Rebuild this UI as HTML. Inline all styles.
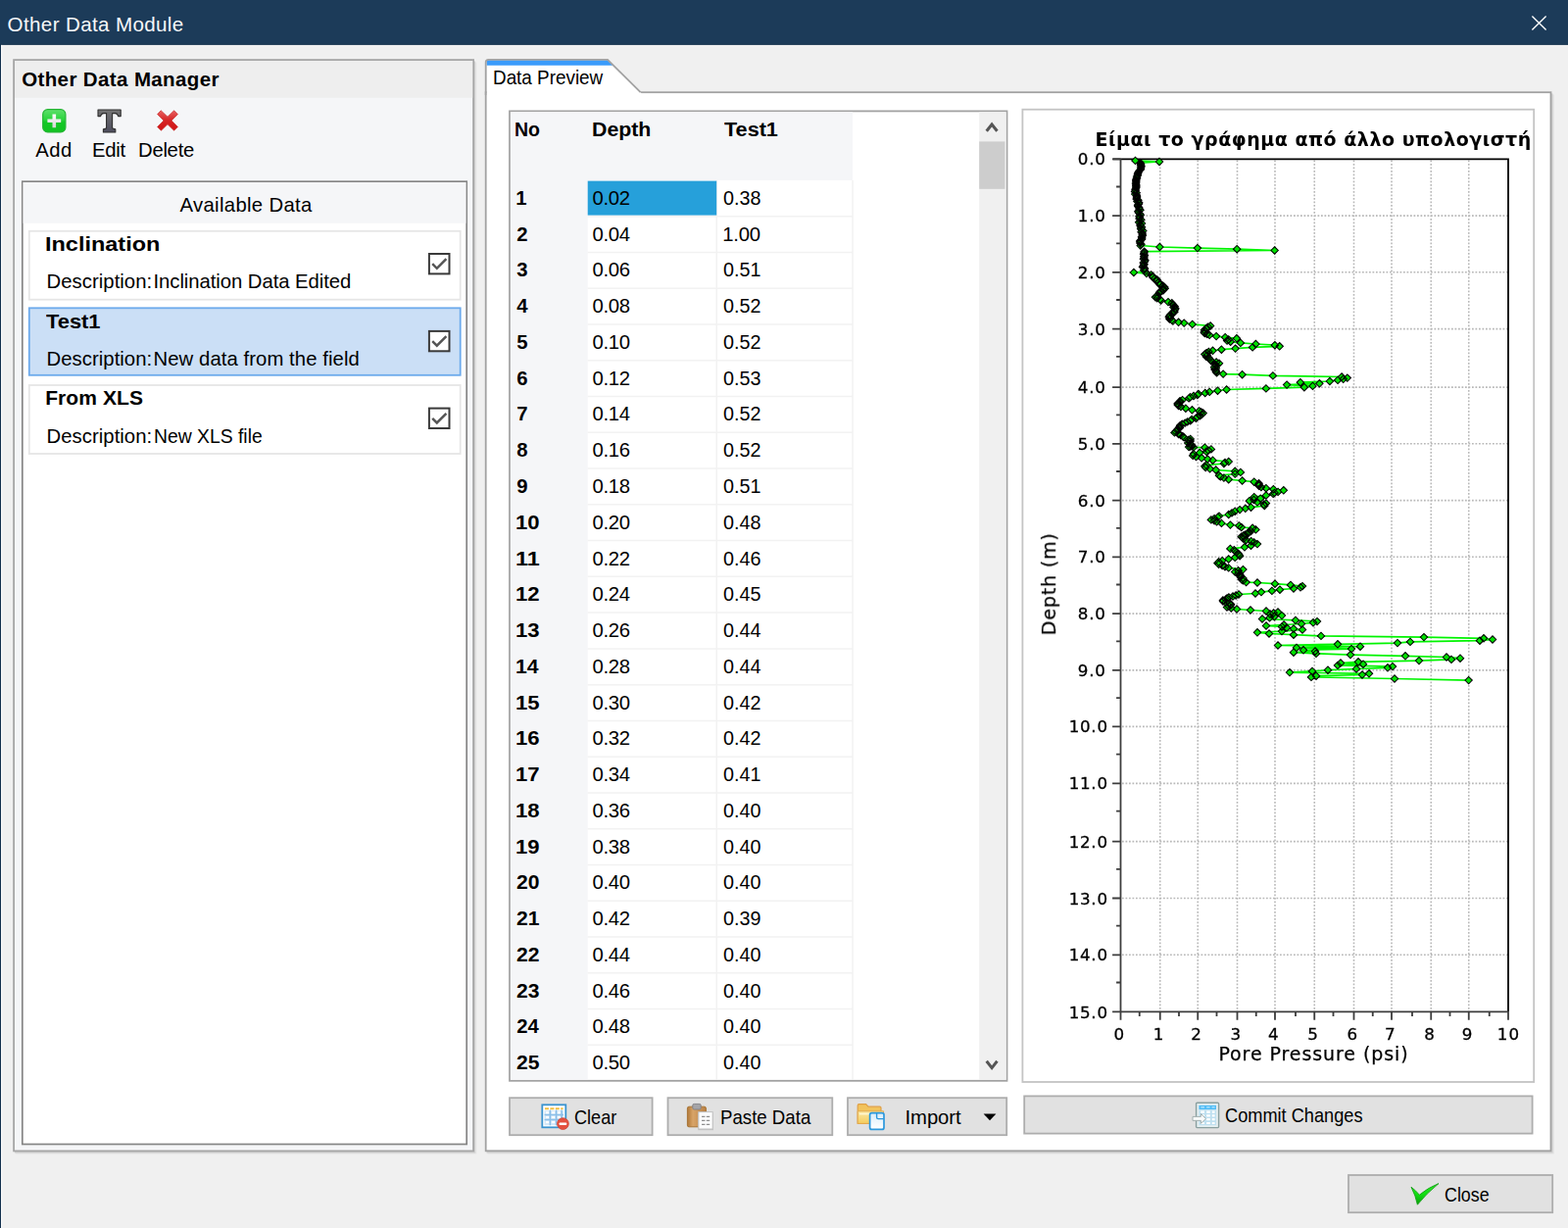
<!DOCTYPE html>
<html lang="en"><head><meta charset="utf-8"><title>Other Data Module</title>
<style>
html,body{margin:0;padding:0;}
body{width:1600px;height:1253px;position:relative;overflow:hidden;background:#f0f0f0;font-family:"Liberation Sans",Arial,sans-serif;color:#000;}
span.t,svg{position:absolute;box-sizing:border-box;}
span.t{white-space:pre;line-height:1;transform-origin:0 0;}
svg{overflow:visible;}
.chart text{font-family:"DejaVu Sans",Verdana,sans-serif;fill:#000;}
.chart .tk{font-size:16.7px;stroke:#000;stroke-width:0.3px;}
.chart .ax{font-size:19px;stroke:#000;stroke-width:0.25px;}
.chart .ti{font-size:19px;font-weight:bold;}
</style></head><body>
<svg width="1600" height="1253" viewBox="0 0 1600 1253" style="left:0;top:0">
<rect x="0.00" y="0.00" width="1600.00" height="45.70" fill="#1c3b59"/>
<rect x="0.00" y="44.60" width="1600.00" height="1.10" fill="#19354f"/>
<rect x="0.00" y="45.00" width="1.15" height="1208.00" fill="#12304d"/>
<rect x="1.15" y="45.90" width="1.05" height="1207.10" fill="#ffffff"/>
<path d="M1563.4 16.4L1577.6 30.6M1577.6 16.4L1563.4 30.6" stroke="#fff" stroke-width="1.35" fill="none"/>
<path d="M485.3 63.5V1176.6H16" fill="none" stroke="#e4e4e4" stroke-width="2"/>
<path d="M484.3 62.5V1175.6H15" fill="none" stroke="#d0d0d0" stroke-width="1.6"/>
<rect x="14.10" y="61.10" width="469.00" height="1113.30" fill="#f5f6f8" stroke="#a6a6a6" stroke-width="1.8"/>
<rect x="15.00" y="62.00" width="467.20" height="37.80" fill="#eeeeee"/>
<rect x="22.80" y="185.20" width="453.40" height="982.30" fill="#ffffff" stroke="#858585" stroke-width="1.7"/>
<rect x="23.60" y="186.00" width="451.80" height="41.80" fill="#f5f6f8"/>
<rect x="29.80" y="235.80" width="439.90" height="69.90" fill="#ffffff" stroke="#e6e6e6" stroke-width="1.8"/>
<rect x="437.90" y="259.00" width="20.60" height="20.40" fill="#ffffff" stroke="#3a3a3a" stroke-width="2"/>
<path d="M441.2 269.2L445.8 273.8L455.4 264.2" stroke="#555" stroke-width="2.5" fill="none"/>
<rect x="29.80" y="314.30" width="439.90" height="68.50" fill="#cbdff6" stroke="#6caaec" stroke-width="1.8"/>
<rect x="437.90" y="337.90" width="20.60" height="20.40" fill="#ffffff" stroke="#3a3a3a" stroke-width="2"/>
<path d="M441.2 348.09999999999997L445.8 352.7L455.4 343.09999999999997" stroke="#555" stroke-width="2.5" fill="none"/>
<rect x="29.80" y="393.00" width="439.90" height="70.00" fill="#ffffff" stroke="#e6e6e6" stroke-width="1.8"/>
<rect x="437.90" y="416.60" width="20.60" height="20.40" fill="#ffffff" stroke="#3a3a3a" stroke-width="2"/>
<path d="M441.2 426.8L445.8 431.40000000000003L455.4 421.8" stroke="#555" stroke-width="2.5" fill="none"/>
<path d="M1584.8 96.5V1176.6H497.5" fill="none" stroke="#e4e4e4" stroke-width="2"/>
<path d="M1583.8 95.5V1175.6H496.5" fill="none" stroke="#d0d0d0" stroke-width="1.6"/>
<rect x="495.70" y="94.20" width="1086.80" height="1080.10" fill="#ffffff" stroke="#a2a2a2" stroke-width="1.8"/>
<path d="M496.6 97V63.5Q496.6 61 498.5 61H620L654.6 95.2V97Z" fill="#fff"/>
<path d="M496.6 66.8V63.2Q496.6 61.2 498.6 61.2H620L625.6 66.8Z" fill="#3a9bfb"/>
<path d="M495.7 97V63.5Q495.7 60.8 498.4 60.8H620L653.6 94.2" fill="none" stroke="#a2a2a2" stroke-width="1.8"/>
<rect x="520.00" y="113.40" width="507.50" height="989.40" fill="#ffffff" stroke="#a2a2a2" stroke-width="1.8"/>
<rect x="520.90" y="114.30" width="349.10" height="69.70" fill="#f5f6f8"/>
<rect x="520.90" y="184.00" width="78.80" height="917.90" fill="#f5f6f8"/>
<path d="M599.7 220.76H870.6M599.7 257.52H870.6M599.7 294.28H870.6M599.7 331.04H870.6M599.7 367.80H870.6M599.7 404.56H870.6M599.7 441.32H870.6M599.7 478.08H870.6M599.7 514.84H870.6M599.7 551.60H870.6M599.7 588.36H870.6M599.7 625.12H870.6M599.7 661.88H870.6M599.7 698.64H870.6M599.7 735.40H870.6M599.7 772.16H870.6M599.7 808.92H870.6M599.7 845.68H870.6M599.7 882.44H870.6M599.7 919.20H870.6M599.7 955.96H870.6M599.7 992.72H870.6M599.7 1029.48H870.6M599.7 1066.24H870.6M731.3 184V1101.9M870 184V1101.9" stroke="#f2f2f2" stroke-width="1.5" fill="none"/>
<rect x="599.70" y="184.60" width="131.50" height="35.00" fill="#26a0da"/>
<rect x="999.20" y="114.30" width="27.40" height="987.60" fill="#f0f0f0"/>
<rect x="999.20" y="144.40" width="26.20" height="48.40" fill="#cdcdcd"/>
<path d="M1006.7 133.8L1012.1 127L1017.5 133.8" stroke="#555" stroke-width="3" fill="none"/>
<path d="M1006.7 1082.8L1012.1 1089.6L1017.5 1082.8" stroke="#555" stroke-width="3" fill="none"/>
<rect x="1043.40" y="111.70" width="521.80" height="992.30" fill="#ffffff" stroke="#c4c4c4" stroke-width="1.8"/>
<rect x="520.00" y="1120.20" width="145.60" height="38.00" fill="#e1e1e1" stroke="#adadad" stroke-width="1.8"/>
<rect x="681.50" y="1120.20" width="167.80" height="38.00" fill="#e1e1e1" stroke="#adadad" stroke-width="1.8"/>
<rect x="865.00" y="1120.20" width="162.20" height="38.00" fill="#e1e1e1" stroke="#adadad" stroke-width="1.8"/>
<rect x="1045.20" y="1118.40" width="518.40" height="38.20" fill="#e1e1e1" stroke="#adadad" stroke-width="1.8"/>
<rect x="1376.00" y="1199.00" width="208.20" height="38.20" fill="#e1e1e1" stroke="#adadad" stroke-width="1.8"/>
<path d="M1003.6 1136.6H1016.4L1010 1143.2Z" fill="#000"/>
</svg>
<svg style="left:43px;top:110.7px" width="25" height="25" viewBox="0 0 25 25"><defs><linearGradient id="ga" x1="0" y1="0" x2="0" y2="1"><stop offset="0" stop-color="#5fe06c"/><stop offset="0.45" stop-color="#2ad43c"/><stop offset="0.55" stop-color="#14c826"/><stop offset="1" stop-color="#12c222"/></linearGradient><linearGradient id="gp" x1="0" y1="0" x2="0" y2="1"><stop offset="0" stop-color="#ffffff"/><stop offset="1" stop-color="#d4d4d4"/></linearGradient></defs><rect x="0.7" y="0.7" width="23.2" height="23.2" rx="5" fill="url(#ga)" stroke="#27b536" stroke-width="1.2"/><path d="M10.5 5.4H14.1V10.5H19.2V14.1H14.1V19.2H10.5V14.1H5.4V10.5H10.5Z" fill="url(#gp)"/></svg>
<svg style="left:99px;top:111px" width="25" height="25" viewBox="0 0 25 25"><defs><linearGradient id="ge" x1="0" y1="0" x2="0" y2="1"><stop offset="0" stop-color="#747474"/><stop offset="1" stop-color="#4c4c5c"/></linearGradient></defs><path d="M1 1H24.2V7.6H21.6Q21 4.8 18.6 4.6H15.6V19.4Q15.8 20.6 18.8 20.8V24H6.4V20.8Q9.4 20.6 9.6 19.4V4.6H6.6Q4.2 4.8 3.6 7.6H1Z" fill="url(#ge)" stroke="#2e2e2e" stroke-width="1.1" stroke-linejoin="round"/></svg>
<svg style="left:159.4px;top:111.4px" width="24" height="24" viewBox="0 0 24 24"><defs><linearGradient id="gd" x1="0" y1="0" x2="0" y2="1"><stop offset="0" stop-color="#e86060"/><stop offset="0.5" stop-color="#d62424"/><stop offset="1" stop-color="#cf1212"/></linearGradient></defs><path d="M5.2 1.8L12 8.2L18.6 1.8L22.4 5.6L16 12L22.4 18.4L18.6 22.2L12 15.8L5.4 22.2L1.6 18.4L8 12L1.6 5.6Z" fill="url(#gd)" stroke="#cc3a3a" stroke-width="0.8" stroke-linejoin="round"/></svg>
<svg class="chart" width="522" height="993" viewBox="1043 111 522 993" style="left:1043px;top:111px">
<defs><filter id="bl" x="-5%" y="-5%" width="110%" height="110%"><feGaussianBlur stdDeviation="0.6"/></filter></defs>
<g filter="url(#bl)">
<path d="M1183.75 163.5V1032.4M1222.25 163.5V1032.4M1262.50 163.5V1032.4M1301.00 163.5V1032.4M1341.25 163.5V1032.4M1381.50 163.5V1032.4M1420.00 163.5V1032.4M1460.25 163.5V1032.4M1498.75 163.5V1032.4M1145.0 220.10H1539.0M1145.0 277.80H1539.0M1145.0 335.60H1539.0M1145.0 395.10H1539.0M1145.0 452.80H1539.0M1145.0 510.60H1539.0M1145.0 568.30H1539.0M1145.0 626.10H1539.0M1145.0 683.90H1539.0M1145.0 741.40H1539.0M1145.0 799.40H1539.0M1145.0 858.60H1539.0M1145.0 916.50H1539.0M1145.0 974.30H1539.0" stroke="#b8b8b8" stroke-width="1.6" stroke-dasharray="1.75 1.75" fill="none"/>
<path d="M1135.5 162.3H1539.0V1032.4" stroke="#000" stroke-width="1.8" fill="none"/>
<path d="M1158.5 163.9L1183.0 165.0L1163.7 166.2L1164.1 167.3L1164.1 168.5L1164.5 169.7L1164.1 170.8L1164.1 172.0L1163.7 173.1L1162.5 174.3L1161.7 175.5L1161.3 176.6L1160.9 177.8L1160.9 178.9L1160.1 180.1L1160.1 181.3L1159.7 182.4L1159.3 183.6L1159.3 184.7L1159.3 185.9L1158.9 187.1L1159.3 188.2L1159.3 189.4L1159.3 190.5L1159.3 191.7L1158.5 193.2L1158.8 194.2L1158.0 195.5L1159.7 196.8L1158.2 198.0L1159.9 199.2L1160.0 200.5L1160.0 201.8L1159.6 203.0L1161.4 204.2L1160.4 205.5L1162.2 206.8L1162.1 208.0L1161.1 209.2L1161.2 210.5L1162.2 211.8L1162.5 213.0L1163.5 214.2L1161.4 215.5L1161.7 216.8L1162.9 218.0L1163.8 219.2L1162.5 220.5L1162.9 221.8L1162.5 223.0L1164.4 224.2L1163.1 225.5L1162.1 226.8L1165.0 228.0L1163.6 229.2L1163.6 230.5L1165.0 231.8L1164.0 233.0L1164.7 234.2L1166.3 235.5L1164.5 236.8L1165.6 238.0L1165.7 239.2L1165.8 240.5L1164.9 241.8L1165.3 243.0L1165.0 244.2L1163.4 245.5L1163.2 246.8L1163.4 248.0L1164.5 249.2L1163.8 250.5L1183.4 252.0L1221.9 253.1L1262.2 254.2L1300.6 255.5L1167.8 256.6L1167.5 257.9L1167.1 259.2L1167.9 260.4L1167.4 261.7L1167.5 263.0L1166.9 264.2L1168.4 265.5L1168.1 266.8L1166.7 268.0L1167.5 269.2L1167.2 270.3L1166.6 271.3L1166.0 272.4L1167.8 273.5L1167.9 274.6L1167.2 275.8L1168.5 276.9L1156.9 278.0L1170.0 279.1L1174.6 280.4L1176.2 281.8L1176.4 283.0L1178.5 284.2L1180.8 285.5L1180.2 286.8L1182.5 288.0L1183.7 289.3L1183.6 290.5L1186.8 291.8L1188.3 293.0L1188.7 294.3L1187.5 295.3L1187.0 296.3L1183.9 297.4L1183.1 298.4L1182.6 299.6L1181.3 300.8L1180.3 302.0L1179.0 303.2L1180.8 304.3L1183.8 305.4L1184.7 306.5L1192.0 308.1L1195.8 309.3L1196.9 310.6L1197.4 311.6L1198.6 312.6L1197.4 313.6L1199.3 314.6L1199.1 315.8L1198.1 317.1L1198.4 318.3L1196.1 319.5L1196.2 320.5L1193.8 321.5L1193.3 322.5L1192.8 323.6L1194.3 324.6L1193.4 325.6L1195.7 326.6L1196.9 327.6L1202.6 328.8L1208.2 329.6L1216.7 330.9L1235.1 332.5L1232.7 333.6L1231.2 334.7L1231.0 335.7L1228.9 336.8L1230.2 337.9L1228.6 339.0L1229.3 340.0L1231.6 340.9L1234.2 341.9L1241.1 343.1L1250.2 344.2L1261.9 345.3L1253.7 346.5L1252.1 347.6L1255.7 348.7L1265.9 349.9L1281.4 351.0L1300.9 352.2L1305.7 353.3L1278.1 354.4L1260.6 355.6L1246.4 356.7L1237.5 357.8L1233.4 359.0L1231.1 360.2L1229.4 361.4L1231.8 362.6L1230.8 363.8L1233.4 365.0L1234.1 366.1L1235.2 367.2L1235.9 368.2L1241.1 369.5L1244.0 370.7L1240.7 372.3L1240.9 373.5L1239.1 374.7L1240.8 375.8L1239.5 376.9L1240.7 378.0L1240.9 379.2L1241.6 380.4L1248.1 381.6L1267.6 382.2L1298.9 383.4L1369.1 384.5L1374.8 385.6L1370.7 386.8L1365.1 387.9L1356.9 389.0L1326.9 390.2L1346.4 391.3L1313.1 392.6L1339.5 393.9L1330.9 395.2L1291.9 396.4L1251.6 397.5L1242.5 398.7L1234.2 399.9L1229.7 401.0L1222.9 402.0L1221.8 403.0L1218.0 404.0L1214.5 405.2L1213.1 406.4L1206.6 408.1L1204.0 409.3L1203.4 410.5L1201.8 411.7L1201.7 412.9L1202.6 414.0L1205.0 415.0L1209.9 416.7L1216.4 418.3L1223.7 419.4L1225.7 420.5L1227.7 421.5L1226.4 422.9L1224.5 424.3L1221.8 425.5L1220.4 426.7L1216.1 428.0L1214.7 429.2L1211.7 430.4L1209.1 431.6L1206.2 432.8L1204.2 434.1L1203.6 435.3L1203.9 436.6L1201.7 437.8L1201.2 439.0L1199.6 440.2L1198.5 441.4L1202.6 443.0L1204.8 444.1L1206.9 445.2L1208.2 446.2L1214.7 447.9L1212.8 448.9L1214.7 449.9L1213.8 450.9L1212.3 451.9L1214.8 453.0L1215.9 454.1L1216.4 455.2L1214.7 455.6L1213.1 456.0L1218.0 456.4L1229.4 456.7L1235.9 458.4L1233.1 459.6L1231.0 460.8L1224.2 462.0L1218.0 463.2L1217.2 464.9L1220.5 466.1L1226.1 467.3L1232.2 468.5L1237.5 469.7L1253.7 471.0L1250.0 472.0L1248.9 473.0L1231.0 474.6L1229.3 475.8L1230.2 477.1L1234.6 478.3L1240.7 479.5L1260.2 480.8L1265.9 481.9L1260.2 483.6L1244.0 485.2L1245.4 486.4L1248.9 487.6L1253.7 489.2L1267.6 490.5L1279.7 491.7L1284.6 493.3L1284.1 494.5L1284.6 495.7L1286.9 497.0L1291.9 498.2L1299.4 499.2L1309.8 500.3L1304.1 501.9L1300.6 502.9L1299.2 503.9L1291.9 505.5L1279.7 507.1L1286.2 508.7L1279.4 510.0L1274.9 511.2L1283.0 512.4L1291.9 513.6L1289.7 514.8L1290.3 516.1L1276.5 517.7L1270.8 518.8L1265.1 520.1L1260.2 521.7L1257.0 523.4L1253.7 525.0L1244.0 526.6L1242.7 527.8L1239.1 529.1L1235.9 530.4L1239.1 531.3L1241.6 532.3L1246.4 533.9L1255.4 535.6L1264.3 536.4L1266.7 538.0L1278.1 538.8L1281.4 540.4L1276.5 542.1L1273.8 543.3L1273.2 544.5L1270.3 545.6L1268.5 546.7L1266.7 547.7L1268.0 548.8L1268.9 549.9L1271.6 551.0L1276.7 552.2L1279.7 553.4L1283.0 555.1L1276.5 556.7L1270.0 558.3L1255.4 559.9L1259.3 561.2L1260.2 562.4L1261.8 563.6L1263.5 564.8L1264.3 566.0L1265.1 567.2L1260.2 568.9L1253.7 570.5L1247.2 572.1L1243.6 573.3L1242.4 574.6L1243.6 575.8L1247.2 577.0L1250.0 578.2L1253.7 579.4L1268.4 581.1L1263.6 582.3L1260.2 583.5L1263.5 585.1L1265.3 586.3L1265.1 587.6L1265.7 588.8L1268.4 590.0L1266.9 591.2L1268.4 592.4L1271.6 594.1L1283.0 594.5L1301.0 595.7L1317.0 596.9L1329.0 598.1L1327.0 599.3L1320.0 600.5L1306.0 601.7L1297.9 602.9L1287.0 604.1L1281.0 605.5L1264.0 606.5L1261.1 607.5L1258.0 608.5L1253.9 609.5L1252.0 610.5L1250.8 611.5L1247.9 612.5L1248.0 613.5L1250.8 614.5L1254.8 615.5L1256.0 616.5L1255.8 617.5L1253.9 618.5L1252.0 619.5L1256.3 620.5L1262.0 621.5L1276.0 622.5L1292.0 623.5L1304.0 624.5L1299.6 625.5L1296.0 626.5L1308.0 628.1L1300.3 629.2L1295.5 630.4L1288.0 631.5L1322.0 632.9L1344.0 634.1L1340.0 635.3L1328.0 636.5L1310.1 637.5L1292.0 638.5L1308.0 639.5L1313.0 640.5L1320.0 641.5L1329.0 642.5L1308.0 644.1L1283.0 645.3L1295.0 646.5L1320.0 647.7L1348.0 648.9L1453.0 650.1L1514.0 651.3L1523.0 652.5L1510.0 653.7L1439.0 654.9L1426.0 656.1L1365.0 657.3L1304.0 658.5L1388.0 659.7L1323.0 660.9L1379.0 662.1L1330.0 663.3L1342.0 664.5L1320.0 665.7L1343.0 666.9L1378.0 668.1L1434.0 669.3L1476.0 670.5L1490.0 671.7L1481.0 672.9L1448.0 674.1L1386.0 675.3L1368.0 676.5L1391.0 677.7L1365.0 678.9L1421.0 680.1L1416.0 681.3L1384.0 682.5L1355.0 683.7L1339.0 684.9L1316.0 686.1L1397.0 687.3L1390.0 688.5L1343.0 689.7L1338.0 690.9L1423.0 692.5L1498.6 694.1" stroke="#00f400" stroke-width="1.7" fill="none" stroke-linejoin="round"/>
<path d="M1154.8 163.9l3.7 -3.7l3.7 3.7l-3.7 3.7zM1179.3 165.0l3.7 -3.7l3.7 3.7l-3.7 3.7zM1160.0 166.2l3.7 -3.7l3.7 3.7l-3.7 3.7zM1160.4 167.3l3.7 -3.7l3.7 3.7l-3.7 3.7zM1160.4 168.5l3.7 -3.7l3.7 3.7l-3.7 3.7zM1160.8 169.7l3.7 -3.7l3.7 3.7l-3.7 3.7zM1160.4 170.8l3.7 -3.7l3.7 3.7l-3.7 3.7zM1160.4 172.0l3.7 -3.7l3.7 3.7l-3.7 3.7zM1160.0 173.1l3.7 -3.7l3.7 3.7l-3.7 3.7zM1158.8 174.3l3.7 -3.7l3.7 3.7l-3.7 3.7zM1158.0 175.5l3.7 -3.7l3.7 3.7l-3.7 3.7zM1157.6 176.6l3.7 -3.7l3.7 3.7l-3.7 3.7zM1157.2 177.8l3.7 -3.7l3.7 3.7l-3.7 3.7zM1157.2 178.9l3.7 -3.7l3.7 3.7l-3.7 3.7zM1156.4 180.1l3.7 -3.7l3.7 3.7l-3.7 3.7zM1156.4 181.3l3.7 -3.7l3.7 3.7l-3.7 3.7zM1156.0 182.4l3.7 -3.7l3.7 3.7l-3.7 3.7zM1155.6 183.6l3.7 -3.7l3.7 3.7l-3.7 3.7zM1155.6 184.7l3.7 -3.7l3.7 3.7l-3.7 3.7zM1155.6 185.9l3.7 -3.7l3.7 3.7l-3.7 3.7zM1155.2 187.1l3.7 -3.7l3.7 3.7l-3.7 3.7zM1155.6 188.2l3.7 -3.7l3.7 3.7l-3.7 3.7zM1155.6 189.4l3.7 -3.7l3.7 3.7l-3.7 3.7zM1155.6 190.5l3.7 -3.7l3.7 3.7l-3.7 3.7zM1155.6 191.7l3.7 -3.7l3.7 3.7l-3.7 3.7zM1154.8 193.2l3.7 -3.7l3.7 3.7l-3.7 3.7zM1155.0 194.2l3.7 -3.7l3.7 3.7l-3.7 3.7zM1154.3 195.5l3.7 -3.7l3.7 3.7l-3.7 3.7zM1156.0 196.8l3.7 -3.7l3.7 3.7l-3.7 3.7zM1154.5 198.0l3.7 -3.7l3.7 3.7l-3.7 3.7zM1156.2 199.2l3.7 -3.7l3.7 3.7l-3.7 3.7zM1156.3 200.5l3.7 -3.7l3.7 3.7l-3.7 3.7zM1156.3 201.8l3.7 -3.7l3.7 3.7l-3.7 3.7zM1155.9 203.0l3.7 -3.7l3.7 3.7l-3.7 3.7zM1157.7 204.2l3.7 -3.7l3.7 3.7l-3.7 3.7zM1156.7 205.5l3.7 -3.7l3.7 3.7l-3.7 3.7zM1158.5 206.8l3.7 -3.7l3.7 3.7l-3.7 3.7zM1158.4 208.0l3.7 -3.7l3.7 3.7l-3.7 3.7zM1157.4 209.2l3.7 -3.7l3.7 3.7l-3.7 3.7zM1157.5 210.5l3.7 -3.7l3.7 3.7l-3.7 3.7zM1158.5 211.8l3.7 -3.7l3.7 3.7l-3.7 3.7zM1158.8 213.0l3.7 -3.7l3.7 3.7l-3.7 3.7zM1159.8 214.2l3.7 -3.7l3.7 3.7l-3.7 3.7zM1157.7 215.5l3.7 -3.7l3.7 3.7l-3.7 3.7zM1158.0 216.8l3.7 -3.7l3.7 3.7l-3.7 3.7zM1159.2 218.0l3.7 -3.7l3.7 3.7l-3.7 3.7zM1160.1 219.2l3.7 -3.7l3.7 3.7l-3.7 3.7zM1158.8 220.5l3.7 -3.7l3.7 3.7l-3.7 3.7zM1159.2 221.8l3.7 -3.7l3.7 3.7l-3.7 3.7zM1158.8 223.0l3.7 -3.7l3.7 3.7l-3.7 3.7zM1160.7 224.2l3.7 -3.7l3.7 3.7l-3.7 3.7zM1159.4 225.5l3.7 -3.7l3.7 3.7l-3.7 3.7zM1158.4 226.8l3.7 -3.7l3.7 3.7l-3.7 3.7zM1161.3 228.0l3.7 -3.7l3.7 3.7l-3.7 3.7zM1159.9 229.2l3.7 -3.7l3.7 3.7l-3.7 3.7zM1159.9 230.5l3.7 -3.7l3.7 3.7l-3.7 3.7zM1161.3 231.8l3.7 -3.7l3.7 3.7l-3.7 3.7zM1160.3 233.0l3.7 -3.7l3.7 3.7l-3.7 3.7zM1161.0 234.2l3.7 -3.7l3.7 3.7l-3.7 3.7zM1162.6 235.5l3.7 -3.7l3.7 3.7l-3.7 3.7zM1160.8 236.8l3.7 -3.7l3.7 3.7l-3.7 3.7zM1161.9 238.0l3.7 -3.7l3.7 3.7l-3.7 3.7zM1162.0 239.2l3.7 -3.7l3.7 3.7l-3.7 3.7zM1162.1 240.5l3.7 -3.7l3.7 3.7l-3.7 3.7zM1161.2 241.8l3.7 -3.7l3.7 3.7l-3.7 3.7zM1161.6 243.0l3.7 -3.7l3.7 3.7l-3.7 3.7zM1161.3 244.2l3.7 -3.7l3.7 3.7l-3.7 3.7zM1159.7 245.5l3.7 -3.7l3.7 3.7l-3.7 3.7zM1159.5 246.8l3.7 -3.7l3.7 3.7l-3.7 3.7zM1159.7 248.0l3.7 -3.7l3.7 3.7l-3.7 3.7zM1160.8 249.2l3.7 -3.7l3.7 3.7l-3.7 3.7zM1160.0 250.5l3.7 -3.7l3.7 3.7l-3.7 3.7zM1179.7 252.0l3.7 -3.7l3.7 3.7l-3.7 3.7zM1218.2 253.1l3.7 -3.7l3.7 3.7l-3.7 3.7zM1258.5 254.2l3.7 -3.7l3.7 3.7l-3.7 3.7zM1296.9 255.5l3.7 -3.7l3.7 3.7l-3.7 3.7zM1164.0 256.6l3.7 -3.7l3.7 3.7l-3.7 3.7zM1163.8 257.9l3.7 -3.7l3.7 3.7l-3.7 3.7zM1163.4 259.2l3.7 -3.7l3.7 3.7l-3.7 3.7zM1164.2 260.4l3.7 -3.7l3.7 3.7l-3.7 3.7zM1163.7 261.7l3.7 -3.7l3.7 3.7l-3.7 3.7zM1163.8 263.0l3.7 -3.7l3.7 3.7l-3.7 3.7zM1163.2 264.2l3.7 -3.7l3.7 3.7l-3.7 3.7zM1164.7 265.5l3.7 -3.7l3.7 3.7l-3.7 3.7zM1164.4 266.8l3.7 -3.7l3.7 3.7l-3.7 3.7zM1163.0 268.0l3.7 -3.7l3.7 3.7l-3.7 3.7zM1163.8 269.2l3.7 -3.7l3.7 3.7l-3.7 3.7zM1163.5 270.3l3.7 -3.7l3.7 3.7l-3.7 3.7zM1162.9 271.3l3.7 -3.7l3.7 3.7l-3.7 3.7zM1162.3 272.4l3.7 -3.7l3.7 3.7l-3.7 3.7zM1164.1 273.5l3.7 -3.7l3.7 3.7l-3.7 3.7zM1164.2 274.6l3.7 -3.7l3.7 3.7l-3.7 3.7zM1163.5 275.8l3.7 -3.7l3.7 3.7l-3.7 3.7zM1164.8 276.9l3.7 -3.7l3.7 3.7l-3.7 3.7zM1153.2 278.0l3.7 -3.7l3.7 3.7l-3.7 3.7zM1166.3 279.1l3.7 -3.7l3.7 3.7l-3.7 3.7zM1170.9 280.4l3.7 -3.7l3.7 3.7l-3.7 3.7zM1172.5 281.8l3.7 -3.7l3.7 3.7l-3.7 3.7zM1172.7 283.0l3.7 -3.7l3.7 3.7l-3.7 3.7zM1174.8 284.2l3.7 -3.7l3.7 3.7l-3.7 3.7zM1177.1 285.5l3.7 -3.7l3.7 3.7l-3.7 3.7zM1176.5 286.8l3.7 -3.7l3.7 3.7l-3.7 3.7zM1178.8 288.0l3.7 -3.7l3.7 3.7l-3.7 3.7zM1180.0 289.3l3.7 -3.7l3.7 3.7l-3.7 3.7zM1179.9 290.5l3.7 -3.7l3.7 3.7l-3.7 3.7zM1183.1 291.8l3.7 -3.7l3.7 3.7l-3.7 3.7zM1184.6 293.0l3.7 -3.7l3.7 3.7l-3.7 3.7zM1185.0 294.3l3.7 -3.7l3.7 3.7l-3.7 3.7zM1183.8 295.3l3.7 -3.7l3.7 3.7l-3.7 3.7zM1183.3 296.3l3.7 -3.7l3.7 3.7l-3.7 3.7zM1180.2 297.4l3.7 -3.7l3.7 3.7l-3.7 3.7zM1179.4 298.4l3.7 -3.7l3.7 3.7l-3.7 3.7zM1178.9 299.6l3.7 -3.7l3.7 3.7l-3.7 3.7zM1177.6 300.8l3.7 -3.7l3.7 3.7l-3.7 3.7zM1176.6 302.0l3.7 -3.7l3.7 3.7l-3.7 3.7zM1175.3 303.2l3.7 -3.7l3.7 3.7l-3.7 3.7zM1177.1 304.3l3.7 -3.7l3.7 3.7l-3.7 3.7zM1180.1 305.4l3.7 -3.7l3.7 3.7l-3.7 3.7zM1181.0 306.5l3.7 -3.7l3.7 3.7l-3.7 3.7zM1188.3 308.1l3.7 -3.7l3.7 3.7l-3.7 3.7zM1192.1 309.3l3.7 -3.7l3.7 3.7l-3.7 3.7zM1193.2 310.6l3.7 -3.7l3.7 3.7l-3.7 3.7zM1193.7 311.6l3.7 -3.7l3.7 3.7l-3.7 3.7zM1194.9 312.6l3.7 -3.7l3.7 3.7l-3.7 3.7zM1193.7 313.6l3.7 -3.7l3.7 3.7l-3.7 3.7zM1195.6 314.6l3.7 -3.7l3.7 3.7l-3.7 3.7zM1195.4 315.8l3.7 -3.7l3.7 3.7l-3.7 3.7zM1194.4 317.1l3.7 -3.7l3.7 3.7l-3.7 3.7zM1194.7 318.3l3.7 -3.7l3.7 3.7l-3.7 3.7zM1192.4 319.5l3.7 -3.7l3.7 3.7l-3.7 3.7zM1192.5 320.5l3.7 -3.7l3.7 3.7l-3.7 3.7zM1190.1 321.5l3.7 -3.7l3.7 3.7l-3.7 3.7zM1189.6 322.5l3.7 -3.7l3.7 3.7l-3.7 3.7zM1189.1 323.6l3.7 -3.7l3.7 3.7l-3.7 3.7zM1190.6 324.6l3.7 -3.7l3.7 3.7l-3.7 3.7zM1189.7 325.6l3.7 -3.7l3.7 3.7l-3.7 3.7zM1192.0 326.6l3.7 -3.7l3.7 3.7l-3.7 3.7zM1193.2 327.6l3.7 -3.7l3.7 3.7l-3.7 3.7zM1198.9 328.8l3.7 -3.7l3.7 3.7l-3.7 3.7zM1204.5 329.6l3.7 -3.7l3.7 3.7l-3.7 3.7zM1213.0 330.9l3.7 -3.7l3.7 3.7l-3.7 3.7zM1231.4 332.5l3.7 -3.7l3.7 3.7l-3.7 3.7zM1229.0 333.6l3.7 -3.7l3.7 3.7l-3.7 3.7zM1227.5 334.7l3.7 -3.7l3.7 3.7l-3.7 3.7zM1227.3 335.7l3.7 -3.7l3.7 3.7l-3.7 3.7zM1225.2 336.8l3.7 -3.7l3.7 3.7l-3.7 3.7zM1226.5 337.9l3.7 -3.7l3.7 3.7l-3.7 3.7zM1224.9 339.0l3.7 -3.7l3.7 3.7l-3.7 3.7zM1225.6 340.0l3.7 -3.7l3.7 3.7l-3.7 3.7zM1227.9 340.9l3.7 -3.7l3.7 3.7l-3.7 3.7zM1230.5 341.9l3.7 -3.7l3.7 3.7l-3.7 3.7zM1237.4 343.1l3.7 -3.7l3.7 3.7l-3.7 3.7zM1246.5 344.2l3.7 -3.7l3.7 3.7l-3.7 3.7zM1258.2 345.3l3.7 -3.7l3.7 3.7l-3.7 3.7zM1250.0 346.5l3.7 -3.7l3.7 3.7l-3.7 3.7zM1248.4 347.6l3.7 -3.7l3.7 3.7l-3.7 3.7zM1252.0 348.7l3.7 -3.7l3.7 3.7l-3.7 3.7zM1262.2 349.9l3.7 -3.7l3.7 3.7l-3.7 3.7zM1277.7 351.0l3.7 -3.7l3.7 3.7l-3.7 3.7zM1297.2 352.2l3.7 -3.7l3.7 3.7l-3.7 3.7zM1302.0 353.3l3.7 -3.7l3.7 3.7l-3.7 3.7zM1274.4 354.4l3.7 -3.7l3.7 3.7l-3.7 3.7zM1256.9 355.6l3.7 -3.7l3.7 3.7l-3.7 3.7zM1242.7 356.7l3.7 -3.7l3.7 3.7l-3.7 3.7zM1233.8 357.8l3.7 -3.7l3.7 3.7l-3.7 3.7zM1229.7 359.0l3.7 -3.7l3.7 3.7l-3.7 3.7zM1227.4 360.2l3.7 -3.7l3.7 3.7l-3.7 3.7zM1225.7 361.4l3.7 -3.7l3.7 3.7l-3.7 3.7zM1228.1 362.6l3.7 -3.7l3.7 3.7l-3.7 3.7zM1227.1 363.8l3.7 -3.7l3.7 3.7l-3.7 3.7zM1229.7 365.0l3.7 -3.7l3.7 3.7l-3.7 3.7zM1230.4 366.1l3.7 -3.7l3.7 3.7l-3.7 3.7zM1231.5 367.2l3.7 -3.7l3.7 3.7l-3.7 3.7zM1232.2 368.2l3.7 -3.7l3.7 3.7l-3.7 3.7zM1237.4 369.5l3.7 -3.7l3.7 3.7l-3.7 3.7zM1240.3 370.7l3.7 -3.7l3.7 3.7l-3.7 3.7zM1237.0 372.3l3.7 -3.7l3.7 3.7l-3.7 3.7zM1237.2 373.5l3.7 -3.7l3.7 3.7l-3.7 3.7zM1235.4 374.7l3.7 -3.7l3.7 3.7l-3.7 3.7zM1237.1 375.8l3.7 -3.7l3.7 3.7l-3.7 3.7zM1235.8 376.9l3.7 -3.7l3.7 3.7l-3.7 3.7zM1237.0 378.0l3.7 -3.7l3.7 3.7l-3.7 3.7zM1237.2 379.2l3.7 -3.7l3.7 3.7l-3.7 3.7zM1237.9 380.4l3.7 -3.7l3.7 3.7l-3.7 3.7zM1244.4 381.6l3.7 -3.7l3.7 3.7l-3.7 3.7zM1263.9 382.2l3.7 -3.7l3.7 3.7l-3.7 3.7zM1295.2 383.4l3.7 -3.7l3.7 3.7l-3.7 3.7zM1365.4 384.5l3.7 -3.7l3.7 3.7l-3.7 3.7zM1371.1 385.6l3.7 -3.7l3.7 3.7l-3.7 3.7zM1367.0 386.8l3.7 -3.7l3.7 3.7l-3.7 3.7zM1361.4 387.9l3.7 -3.7l3.7 3.7l-3.7 3.7zM1353.2 389.0l3.7 -3.7l3.7 3.7l-3.7 3.7zM1323.2 390.2l3.7 -3.7l3.7 3.7l-3.7 3.7zM1342.7 391.3l3.7 -3.7l3.7 3.7l-3.7 3.7zM1309.4 392.6l3.7 -3.7l3.7 3.7l-3.7 3.7zM1335.8 393.9l3.7 -3.7l3.7 3.7l-3.7 3.7zM1327.2 395.2l3.7 -3.7l3.7 3.7l-3.7 3.7zM1288.2 396.4l3.7 -3.7l3.7 3.7l-3.7 3.7zM1247.9 397.5l3.7 -3.7l3.7 3.7l-3.7 3.7zM1238.8 398.7l3.7 -3.7l3.7 3.7l-3.7 3.7zM1230.5 399.9l3.7 -3.7l3.7 3.7l-3.7 3.7zM1226.0 401.0l3.7 -3.7l3.7 3.7l-3.7 3.7zM1219.2 402.0l3.7 -3.7l3.7 3.7l-3.7 3.7zM1218.1 403.0l3.7 -3.7l3.7 3.7l-3.7 3.7zM1214.3 404.0l3.7 -3.7l3.7 3.7l-3.7 3.7zM1210.8 405.2l3.7 -3.7l3.7 3.7l-3.7 3.7zM1209.4 406.4l3.7 -3.7l3.7 3.7l-3.7 3.7zM1202.9 408.1l3.7 -3.7l3.7 3.7l-3.7 3.7zM1200.3 409.3l3.7 -3.7l3.7 3.7l-3.7 3.7zM1199.7 410.5l3.7 -3.7l3.7 3.7l-3.7 3.7zM1198.1 411.7l3.7 -3.7l3.7 3.7l-3.7 3.7zM1198.0 412.9l3.7 -3.7l3.7 3.7l-3.7 3.7zM1198.9 414.0l3.7 -3.7l3.7 3.7l-3.7 3.7zM1201.3 415.0l3.7 -3.7l3.7 3.7l-3.7 3.7zM1206.2 416.7l3.7 -3.7l3.7 3.7l-3.7 3.7zM1212.7 418.3l3.7 -3.7l3.7 3.7l-3.7 3.7zM1220.0 419.4l3.7 -3.7l3.7 3.7l-3.7 3.7zM1222.0 420.5l3.7 -3.7l3.7 3.7l-3.7 3.7zM1224.0 421.5l3.7 -3.7l3.7 3.7l-3.7 3.7zM1222.7 422.9l3.7 -3.7l3.7 3.7l-3.7 3.7zM1220.8 424.3l3.7 -3.7l3.7 3.7l-3.7 3.7zM1218.1 425.5l3.7 -3.7l3.7 3.7l-3.7 3.7zM1216.7 426.7l3.7 -3.7l3.7 3.7l-3.7 3.7zM1212.4 428.0l3.7 -3.7l3.7 3.7l-3.7 3.7zM1211.0 429.2l3.7 -3.7l3.7 3.7l-3.7 3.7zM1208.0 430.4l3.7 -3.7l3.7 3.7l-3.7 3.7zM1205.4 431.6l3.7 -3.7l3.7 3.7l-3.7 3.7zM1202.5 432.8l3.7 -3.7l3.7 3.7l-3.7 3.7zM1200.5 434.1l3.7 -3.7l3.7 3.7l-3.7 3.7zM1199.9 435.3l3.7 -3.7l3.7 3.7l-3.7 3.7zM1200.2 436.6l3.7 -3.7l3.7 3.7l-3.7 3.7zM1198.0 437.8l3.7 -3.7l3.7 3.7l-3.7 3.7zM1197.5 439.0l3.7 -3.7l3.7 3.7l-3.7 3.7zM1195.9 440.2l3.7 -3.7l3.7 3.7l-3.7 3.7zM1194.8 441.4l3.7 -3.7l3.7 3.7l-3.7 3.7zM1198.9 443.0l3.7 -3.7l3.7 3.7l-3.7 3.7zM1201.1 444.1l3.7 -3.7l3.7 3.7l-3.7 3.7zM1203.2 445.2l3.7 -3.7l3.7 3.7l-3.7 3.7zM1204.5 446.2l3.7 -3.7l3.7 3.7l-3.7 3.7zM1211.0 447.9l3.7 -3.7l3.7 3.7l-3.7 3.7zM1209.1 448.9l3.7 -3.7l3.7 3.7l-3.7 3.7zM1211.0 449.9l3.7 -3.7l3.7 3.7l-3.7 3.7zM1210.1 450.9l3.7 -3.7l3.7 3.7l-3.7 3.7zM1208.6 451.9l3.7 -3.7l3.7 3.7l-3.7 3.7zM1211.1 453.0l3.7 -3.7l3.7 3.7l-3.7 3.7zM1212.2 454.1l3.7 -3.7l3.7 3.7l-3.7 3.7zM1212.7 455.2l3.7 -3.7l3.7 3.7l-3.7 3.7zM1211.0 455.6l3.7 -3.7l3.7 3.7l-3.7 3.7zM1209.4 456.0l3.7 -3.7l3.7 3.7l-3.7 3.7zM1214.3 456.4l3.7 -3.7l3.7 3.7l-3.7 3.7zM1225.7 456.7l3.7 -3.7l3.7 3.7l-3.7 3.7zM1232.2 458.4l3.7 -3.7l3.7 3.7l-3.7 3.7zM1229.4 459.6l3.7 -3.7l3.7 3.7l-3.7 3.7zM1227.3 460.8l3.7 -3.7l3.7 3.7l-3.7 3.7zM1220.5 462.0l3.7 -3.7l3.7 3.7l-3.7 3.7zM1214.3 463.2l3.7 -3.7l3.7 3.7l-3.7 3.7zM1213.5 464.9l3.7 -3.7l3.7 3.7l-3.7 3.7zM1216.8 466.1l3.7 -3.7l3.7 3.7l-3.7 3.7zM1222.4 467.3l3.7 -3.7l3.7 3.7l-3.7 3.7zM1228.5 468.5l3.7 -3.7l3.7 3.7l-3.7 3.7zM1233.8 469.7l3.7 -3.7l3.7 3.7l-3.7 3.7zM1250.0 471.0l3.7 -3.7l3.7 3.7l-3.7 3.7zM1246.3 472.0l3.7 -3.7l3.7 3.7l-3.7 3.7zM1245.2 473.0l3.7 -3.7l3.7 3.7l-3.7 3.7zM1227.3 474.6l3.7 -3.7l3.7 3.7l-3.7 3.7zM1225.6 475.8l3.7 -3.7l3.7 3.7l-3.7 3.7zM1226.5 477.1l3.7 -3.7l3.7 3.7l-3.7 3.7zM1230.9 478.3l3.7 -3.7l3.7 3.7l-3.7 3.7zM1237.0 479.5l3.7 -3.7l3.7 3.7l-3.7 3.7zM1256.5 480.8l3.7 -3.7l3.7 3.7l-3.7 3.7zM1262.2 481.9l3.7 -3.7l3.7 3.7l-3.7 3.7zM1256.5 483.6l3.7 -3.7l3.7 3.7l-3.7 3.7zM1240.3 485.2l3.7 -3.7l3.7 3.7l-3.7 3.7zM1241.7 486.4l3.7 -3.7l3.7 3.7l-3.7 3.7zM1245.2 487.6l3.7 -3.7l3.7 3.7l-3.7 3.7zM1250.0 489.2l3.7 -3.7l3.7 3.7l-3.7 3.7zM1263.9 490.5l3.7 -3.7l3.7 3.7l-3.7 3.7zM1276.0 491.7l3.7 -3.7l3.7 3.7l-3.7 3.7zM1280.9 493.3l3.7 -3.7l3.7 3.7l-3.7 3.7zM1280.4 494.5l3.7 -3.7l3.7 3.7l-3.7 3.7zM1280.9 495.7l3.7 -3.7l3.7 3.7l-3.7 3.7zM1283.2 497.0l3.7 -3.7l3.7 3.7l-3.7 3.7zM1288.2 498.2l3.7 -3.7l3.7 3.7l-3.7 3.7zM1295.7 499.2l3.7 -3.7l3.7 3.7l-3.7 3.7zM1306.1 500.3l3.7 -3.7l3.7 3.7l-3.7 3.7zM1300.4 501.9l3.7 -3.7l3.7 3.7l-3.7 3.7zM1296.9 502.9l3.7 -3.7l3.7 3.7l-3.7 3.7zM1295.5 503.9l3.7 -3.7l3.7 3.7l-3.7 3.7zM1288.2 505.5l3.7 -3.7l3.7 3.7l-3.7 3.7zM1276.0 507.1l3.7 -3.7l3.7 3.7l-3.7 3.7zM1282.5 508.7l3.7 -3.7l3.7 3.7l-3.7 3.7zM1275.7 510.0l3.7 -3.7l3.7 3.7l-3.7 3.7zM1271.2 511.2l3.7 -3.7l3.7 3.7l-3.7 3.7zM1279.3 512.4l3.7 -3.7l3.7 3.7l-3.7 3.7zM1288.2 513.6l3.7 -3.7l3.7 3.7l-3.7 3.7zM1286.0 514.8l3.7 -3.7l3.7 3.7l-3.7 3.7zM1286.6 516.1l3.7 -3.7l3.7 3.7l-3.7 3.7zM1272.8 517.7l3.7 -3.7l3.7 3.7l-3.7 3.7zM1267.1 518.8l3.7 -3.7l3.7 3.7l-3.7 3.7zM1261.4 520.1l3.7 -3.7l3.7 3.7l-3.7 3.7zM1256.5 521.7l3.7 -3.7l3.7 3.7l-3.7 3.7zM1253.3 523.4l3.7 -3.7l3.7 3.7l-3.7 3.7zM1250.0 525.0l3.7 -3.7l3.7 3.7l-3.7 3.7zM1240.3 526.6l3.7 -3.7l3.7 3.7l-3.7 3.7zM1239.0 527.8l3.7 -3.7l3.7 3.7l-3.7 3.7zM1235.4 529.1l3.7 -3.7l3.7 3.7l-3.7 3.7zM1232.2 530.4l3.7 -3.7l3.7 3.7l-3.7 3.7zM1235.4 531.3l3.7 -3.7l3.7 3.7l-3.7 3.7zM1237.9 532.3l3.7 -3.7l3.7 3.7l-3.7 3.7zM1242.7 533.9l3.7 -3.7l3.7 3.7l-3.7 3.7zM1251.7 535.6l3.7 -3.7l3.7 3.7l-3.7 3.7zM1260.6 536.4l3.7 -3.7l3.7 3.7l-3.7 3.7zM1263.0 538.0l3.7 -3.7l3.7 3.7l-3.7 3.7zM1274.4 538.8l3.7 -3.7l3.7 3.7l-3.7 3.7zM1277.7 540.4l3.7 -3.7l3.7 3.7l-3.7 3.7zM1272.8 542.1l3.7 -3.7l3.7 3.7l-3.7 3.7zM1270.1 543.3l3.7 -3.7l3.7 3.7l-3.7 3.7zM1269.5 544.5l3.7 -3.7l3.7 3.7l-3.7 3.7zM1266.6 545.6l3.7 -3.7l3.7 3.7l-3.7 3.7zM1264.8 546.7l3.7 -3.7l3.7 3.7l-3.7 3.7zM1263.0 547.7l3.7 -3.7l3.7 3.7l-3.7 3.7zM1264.3 548.8l3.7 -3.7l3.7 3.7l-3.7 3.7zM1265.2 549.9l3.7 -3.7l3.7 3.7l-3.7 3.7zM1267.9 551.0l3.7 -3.7l3.7 3.7l-3.7 3.7zM1273.0 552.2l3.7 -3.7l3.7 3.7l-3.7 3.7zM1276.0 553.4l3.7 -3.7l3.7 3.7l-3.7 3.7zM1279.3 555.1l3.7 -3.7l3.7 3.7l-3.7 3.7zM1272.8 556.7l3.7 -3.7l3.7 3.7l-3.7 3.7zM1266.3 558.3l3.7 -3.7l3.7 3.7l-3.7 3.7zM1251.7 559.9l3.7 -3.7l3.7 3.7l-3.7 3.7zM1255.6 561.2l3.7 -3.7l3.7 3.7l-3.7 3.7zM1256.5 562.4l3.7 -3.7l3.7 3.7l-3.7 3.7zM1258.1 563.6l3.7 -3.7l3.7 3.7l-3.7 3.7zM1259.8 564.8l3.7 -3.7l3.7 3.7l-3.7 3.7zM1260.6 566.0l3.7 -3.7l3.7 3.7l-3.7 3.7zM1261.4 567.2l3.7 -3.7l3.7 3.7l-3.7 3.7zM1256.5 568.9l3.7 -3.7l3.7 3.7l-3.7 3.7zM1250.0 570.5l3.7 -3.7l3.7 3.7l-3.7 3.7zM1243.5 572.1l3.7 -3.7l3.7 3.7l-3.7 3.7zM1239.9 573.3l3.7 -3.7l3.7 3.7l-3.7 3.7zM1238.7 574.6l3.7 -3.7l3.7 3.7l-3.7 3.7zM1239.9 575.8l3.7 -3.7l3.7 3.7l-3.7 3.7zM1243.5 577.0l3.7 -3.7l3.7 3.7l-3.7 3.7zM1246.3 578.2l3.7 -3.7l3.7 3.7l-3.7 3.7zM1250.0 579.4l3.7 -3.7l3.7 3.7l-3.7 3.7zM1264.7 581.1l3.7 -3.7l3.7 3.7l-3.7 3.7zM1259.9 582.3l3.7 -3.7l3.7 3.7l-3.7 3.7zM1256.5 583.5l3.7 -3.7l3.7 3.7l-3.7 3.7zM1259.8 585.1l3.7 -3.7l3.7 3.7l-3.7 3.7zM1261.6 586.3l3.7 -3.7l3.7 3.7l-3.7 3.7zM1261.4 587.6l3.7 -3.7l3.7 3.7l-3.7 3.7zM1262.0 588.8l3.7 -3.7l3.7 3.7l-3.7 3.7zM1264.7 590.0l3.7 -3.7l3.7 3.7l-3.7 3.7zM1263.2 591.2l3.7 -3.7l3.7 3.7l-3.7 3.7zM1264.7 592.4l3.7 -3.7l3.7 3.7l-3.7 3.7zM1267.9 594.1l3.7 -3.7l3.7 3.7l-3.7 3.7zM1279.3 594.5l3.7 -3.7l3.7 3.7l-3.7 3.7zM1297.3 595.7l3.7 -3.7l3.7 3.7l-3.7 3.7zM1313.3 596.9l3.7 -3.7l3.7 3.7l-3.7 3.7zM1325.3 598.1l3.7 -3.7l3.7 3.7l-3.7 3.7zM1323.3 599.3l3.7 -3.7l3.7 3.7l-3.7 3.7zM1316.3 600.5l3.7 -3.7l3.7 3.7l-3.7 3.7zM1302.3 601.7l3.7 -3.7l3.7 3.7l-3.7 3.7zM1294.2 602.9l3.7 -3.7l3.7 3.7l-3.7 3.7zM1283.3 604.1l3.7 -3.7l3.7 3.7l-3.7 3.7zM1277.3 605.5l3.7 -3.7l3.7 3.7l-3.7 3.7zM1260.3 606.5l3.7 -3.7l3.7 3.7l-3.7 3.7zM1257.4 607.5l3.7 -3.7l3.7 3.7l-3.7 3.7zM1254.3 608.5l3.7 -3.7l3.7 3.7l-3.7 3.7zM1250.2 609.5l3.7 -3.7l3.7 3.7l-3.7 3.7zM1248.3 610.5l3.7 -3.7l3.7 3.7l-3.7 3.7zM1247.1 611.5l3.7 -3.7l3.7 3.7l-3.7 3.7zM1244.2 612.5l3.7 -3.7l3.7 3.7l-3.7 3.7zM1244.3 613.5l3.7 -3.7l3.7 3.7l-3.7 3.7zM1247.1 614.5l3.7 -3.7l3.7 3.7l-3.7 3.7zM1251.1 615.5l3.7 -3.7l3.7 3.7l-3.7 3.7zM1252.3 616.5l3.7 -3.7l3.7 3.7l-3.7 3.7zM1252.1 617.5l3.7 -3.7l3.7 3.7l-3.7 3.7zM1250.2 618.5l3.7 -3.7l3.7 3.7l-3.7 3.7zM1248.3 619.5l3.7 -3.7l3.7 3.7l-3.7 3.7zM1252.6 620.5l3.7 -3.7l3.7 3.7l-3.7 3.7zM1258.3 621.5l3.7 -3.7l3.7 3.7l-3.7 3.7zM1272.3 622.5l3.7 -3.7l3.7 3.7l-3.7 3.7zM1288.3 623.5l3.7 -3.7l3.7 3.7l-3.7 3.7zM1300.3 624.5l3.7 -3.7l3.7 3.7l-3.7 3.7zM1295.9 625.5l3.7 -3.7l3.7 3.7l-3.7 3.7zM1292.3 626.5l3.7 -3.7l3.7 3.7l-3.7 3.7zM1304.3 628.1l3.7 -3.7l3.7 3.7l-3.7 3.7zM1296.6 629.2l3.7 -3.7l3.7 3.7l-3.7 3.7zM1291.8 630.4l3.7 -3.7l3.7 3.7l-3.7 3.7zM1284.3 631.5l3.7 -3.7l3.7 3.7l-3.7 3.7zM1318.3 632.9l3.7 -3.7l3.7 3.7l-3.7 3.7zM1340.3 634.1l3.7 -3.7l3.7 3.7l-3.7 3.7zM1336.3 635.3l3.7 -3.7l3.7 3.7l-3.7 3.7zM1324.3 636.5l3.7 -3.7l3.7 3.7l-3.7 3.7zM1306.4 637.5l3.7 -3.7l3.7 3.7l-3.7 3.7zM1288.3 638.5l3.7 -3.7l3.7 3.7l-3.7 3.7zM1304.3 639.5l3.7 -3.7l3.7 3.7l-3.7 3.7zM1309.3 640.5l3.7 -3.7l3.7 3.7l-3.7 3.7zM1316.3 641.5l3.7 -3.7l3.7 3.7l-3.7 3.7zM1325.3 642.5l3.7 -3.7l3.7 3.7l-3.7 3.7zM1304.3 644.1l3.7 -3.7l3.7 3.7l-3.7 3.7zM1279.3 645.3l3.7 -3.7l3.7 3.7l-3.7 3.7zM1291.3 646.5l3.7 -3.7l3.7 3.7l-3.7 3.7zM1316.3 647.7l3.7 -3.7l3.7 3.7l-3.7 3.7zM1344.3 648.9l3.7 -3.7l3.7 3.7l-3.7 3.7zM1449.3 650.1l3.7 -3.7l3.7 3.7l-3.7 3.7zM1510.3 651.3l3.7 -3.7l3.7 3.7l-3.7 3.7zM1519.3 652.5l3.7 -3.7l3.7 3.7l-3.7 3.7zM1506.3 653.7l3.7 -3.7l3.7 3.7l-3.7 3.7zM1435.3 654.9l3.7 -3.7l3.7 3.7l-3.7 3.7zM1422.3 656.1l3.7 -3.7l3.7 3.7l-3.7 3.7zM1361.3 657.3l3.7 -3.7l3.7 3.7l-3.7 3.7zM1300.3 658.5l3.7 -3.7l3.7 3.7l-3.7 3.7zM1384.3 659.7l3.7 -3.7l3.7 3.7l-3.7 3.7zM1319.3 660.9l3.7 -3.7l3.7 3.7l-3.7 3.7zM1375.3 662.1l3.7 -3.7l3.7 3.7l-3.7 3.7zM1326.3 663.3l3.7 -3.7l3.7 3.7l-3.7 3.7zM1338.3 664.5l3.7 -3.7l3.7 3.7l-3.7 3.7zM1316.3 665.7l3.7 -3.7l3.7 3.7l-3.7 3.7zM1339.3 666.9l3.7 -3.7l3.7 3.7l-3.7 3.7zM1374.3 668.1l3.7 -3.7l3.7 3.7l-3.7 3.7zM1430.3 669.3l3.7 -3.7l3.7 3.7l-3.7 3.7zM1472.3 670.5l3.7 -3.7l3.7 3.7l-3.7 3.7zM1486.3 671.7l3.7 -3.7l3.7 3.7l-3.7 3.7zM1477.3 672.9l3.7 -3.7l3.7 3.7l-3.7 3.7zM1444.3 674.1l3.7 -3.7l3.7 3.7l-3.7 3.7zM1382.3 675.3l3.7 -3.7l3.7 3.7l-3.7 3.7zM1364.3 676.5l3.7 -3.7l3.7 3.7l-3.7 3.7zM1387.3 677.7l3.7 -3.7l3.7 3.7l-3.7 3.7zM1361.3 678.9l3.7 -3.7l3.7 3.7l-3.7 3.7zM1417.3 680.1l3.7 -3.7l3.7 3.7l-3.7 3.7zM1412.3 681.3l3.7 -3.7l3.7 3.7l-3.7 3.7zM1380.3 682.5l3.7 -3.7l3.7 3.7l-3.7 3.7zM1351.3 683.7l3.7 -3.7l3.7 3.7l-3.7 3.7zM1335.3 684.9l3.7 -3.7l3.7 3.7l-3.7 3.7zM1312.3 686.1l3.7 -3.7l3.7 3.7l-3.7 3.7zM1393.3 687.3l3.7 -3.7l3.7 3.7l-3.7 3.7zM1386.3 688.5l3.7 -3.7l3.7 3.7l-3.7 3.7zM1339.3 689.7l3.7 -3.7l3.7 3.7l-3.7 3.7zM1334.3 690.9l3.7 -3.7l3.7 3.7l-3.7 3.7zM1419.3 692.5l3.7 -3.7l3.7 3.7l-3.7 3.7zM1494.9 694.1l3.7 -3.7l3.7 3.7l-3.7 3.7z" stroke="#000" stroke-width="1.05" fill="#00e000"/>
<path d="M1143.5 162.3V1033.0M1142.9 1032.4H1539.6M1143.5 162.30h-8.4M1143.5 190.50h-4.4M1143.5 220.10h-8.4M1143.5 248.30h-4.4M1143.5 277.80h-8.4M1143.5 306.00h-4.4M1143.5 335.60h-8.4M1143.5 363.80h-4.4M1143.5 395.10h-8.4M1143.5 423.30h-4.4M1143.5 452.80h-8.4M1143.5 481.00h-4.4M1143.5 510.60h-8.4M1143.5 538.80h-4.4M1143.5 568.30h-8.4M1143.5 596.50h-4.4M1143.5 626.10h-8.4M1143.5 654.30h-4.4M1143.5 683.90h-8.4M1143.5 712.10h-4.4M1143.5 741.40h-8.4M1143.5 769.60h-4.4M1143.5 799.40h-8.4M1143.5 827.60h-4.4M1143.5 858.60h-8.4M1143.5 886.80h-4.4M1143.5 916.50h-8.4M1143.5 944.70h-4.4M1143.5 974.30h-8.4M1143.5 1002.50h-4.4M1143.5 1032.40h-8.4M1143.50 1032.4v8.4M1162.75 1032.4v4.6M1183.75 1032.4v8.4M1203.00 1032.4v4.6M1222.25 1032.4v8.4M1241.50 1032.4v4.6M1262.50 1032.4v8.4M1281.75 1032.4v4.6M1301.00 1032.4v8.4M1322.00 1032.4v4.6M1341.25 1032.4v8.4M1360.50 1032.4v4.6M1381.50 1032.4v8.4M1400.75 1032.4v4.6M1420.00 1032.4v8.4M1441.00 1032.4v4.6M1460.25 1032.4v8.4M1479.50 1032.4v4.6M1498.75 1032.4v8.4M1519.75 1032.4v4.6M1539.00 1032.4v8.4" stroke="#3c3c3c" stroke-width="1.8" fill="none"/>
<text x="1099.7" y="168.4" class="tk" textLength="28.2" lengthAdjust="spacing">0.0</text>
<text x="1099.7" y="226.2" class="tk" textLength="28.2" lengthAdjust="spacing">1.0</text>
<text x="1099.7" y="283.9" class="tk" textLength="28.2" lengthAdjust="spacing">2.0</text>
<text x="1099.7" y="341.7" class="tk" textLength="28.2" lengthAdjust="spacing">3.0</text>
<text x="1099.7" y="401.2" class="tk" textLength="28.2" lengthAdjust="spacing">4.0</text>
<text x="1099.7" y="458.9" class="tk" textLength="28.2" lengthAdjust="spacing">5.0</text>
<text x="1099.7" y="516.6" class="tk" textLength="28.2" lengthAdjust="spacing">6.0</text>
<text x="1099.7" y="574.3" class="tk" textLength="28.2" lengthAdjust="spacing">7.0</text>
<text x="1099.7" y="632.1" class="tk" textLength="28.2" lengthAdjust="spacing">8.0</text>
<text x="1099.7" y="689.9" class="tk" textLength="28.2" lengthAdjust="spacing">9.0</text>
<text x="1090.7" y="747.4" class="tk" textLength="39.3" lengthAdjust="spacing">10.0</text>
<text x="1090.7" y="805.4" class="tk" textLength="39.3" lengthAdjust="spacing">11.0</text>
<text x="1090.7" y="864.6" class="tk" textLength="39.3" lengthAdjust="spacing">12.0</text>
<text x="1090.7" y="922.5" class="tk" textLength="39.3" lengthAdjust="spacing">13.0</text>
<text x="1090.7" y="980.3" class="tk" textLength="39.3" lengthAdjust="spacing">14.0</text>
<text x="1090.7" y="1038.5" class="tk" textLength="39.3" lengthAdjust="spacing">15.0</text>
<text x="1141.7" y="1061.3" text-anchor="middle" class="tk">0</text>
<text x="1182.0" y="1061.3" text-anchor="middle" class="tk">1</text>
<text x="1220.5" y="1061.3" text-anchor="middle" class="tk">2</text>
<text x="1260.7" y="1061.3" text-anchor="middle" class="tk">3</text>
<text x="1299.2" y="1061.3" text-anchor="middle" class="tk">4</text>
<text x="1339.5" y="1061.3" text-anchor="middle" class="tk">5</text>
<text x="1379.7" y="1061.3" text-anchor="middle" class="tk">6</text>
<text x="1418.2" y="1061.3" text-anchor="middle" class="tk">7</text>
<text x="1458.5" y="1061.3" text-anchor="middle" class="tk">8</text>
<text x="1497.0" y="1061.3" text-anchor="middle" class="tk">9</text>
<text x="1527.8" y="1061.3" class="tk" textLength="22.2" lengthAdjust="spacing">10</text>
<text x="1243.4" y="1082.3" class="ax" textLength="193.2" lengthAdjust="spacing">Pore Pressure (psi)</text>
<text transform="translate(1076.9 648.2) rotate(-90)" class="ax" textLength="104" lengthAdjust="spacing">Depth (m)</text>
<text x="1117.6" y="148.8" class="ti" textLength="444.6" lengthAdjust="spacing">Είμαι το γράφημα από άλλο υπολογιστή</text>
</g></svg>
<svg style="left:552.2px;top:1126.2px" width="30" height="28" viewBox="0 0 30 28"><rect x="1.3" y="1.3" width="24" height="23" fill="#fff" stroke="#3a94d0" stroke-width="1.8"/><path d="M4 5.2H22.6" stroke="#f4c040" stroke-width="2" stroke-dasharray="4 1.4" fill="none"/><rect x="3.6" y="7.2" width="19.4" height="15" fill="#d4e8f8"/><path d="M3.6 11.6H23M3.6 16.4H23M9.4 6.6V22.2M15.6 6.6V22.2M21 6.6V15" stroke="#8cbfe8" stroke-width="1.5" fill="none"/><path d="M5 9.2H8M11 9.2H14M17 9.2H20M5 14H8M11 14H14M17 14H20M5 19H8M11 19H14" stroke="#fff" stroke-width="2" fill="none"/><circle cx="22.4" cy="20.6" r="5.9" fill="#e4503e" stroke="#d04434" stroke-width="0.8"/><rect x="18.6" y="19.4" width="7.6" height="2.6" rx="0.8" fill="#fff"/></svg>
<svg style="left:700px;top:1125px" width="30" height="29" viewBox="0 0 30 29"><defs><linearGradient id="gc" x1="0" y1="0" x2="1" y2="0"><stop offset="0" stop-color="#b07838"/><stop offset="0.3" stop-color="#d8a468"/><stop offset="1" stop-color="#b88044"/></linearGradient></defs><rect x="1.4" y="4.2" width="19" height="20.6" rx="1.6" fill="url(#gc)" stroke="#a87434" stroke-width="1"/><rect x="6.8" y="1.4" width="8.4" height="5.6" rx="1.4" fill="#a4a4a8" stroke="#808084" stroke-width="0.9"/><rect x="12.4" y="10.6" width="15.6" height="17.6" fill="#c4c4c4"/><rect x="12.8" y="9.6" width="14.4" height="17.4" fill="#fcfcfc" stroke="#c0c0c0" stroke-width="1"/><path d="M16 14.4H24.4M16 18.4H24.4M16 22.4H24.4" stroke="#8e8e8e" stroke-width="1.4" stroke-dasharray="3.4 1.4" fill="none"/></svg>
<svg style="left:874px;top:1125px" width="30" height="29" viewBox="0 0 30 29"><defs><linearGradient id="gf" x1="0" y1="0" x2="0" y2="1"><stop offset="0" stop-color="#fbe9a8"/><stop offset="1" stop-color="#f4cc5c"/></linearGradient><linearGradient id="gdoc" x1="0" y1="0" x2="0" y2="1"><stop offset="0" stop-color="#d8ecfa"/><stop offset="1" stop-color="#ffffff"/></linearGradient></defs><path d="M1.2 3Q1.2 1.6 2.6 1.6H9.6L12 4.2H23.6Q25 4.2 25 5.6V21.4H1.2Z" fill="#f2c35c" stroke="#dfa048" stroke-width="1.2"/><path d="M1.2 8.8H27.6L25 21.4H1.2Z" fill="url(#gf)" stroke="#e2a84e" stroke-width="1"/><path d="M3 11.6H24" stroke="#fff6d0" stroke-width="1.6"/><rect x="13.6" y="10.6" width="14.4" height="16.8" rx="2" fill="url(#gdoc)" stroke="#2c98dc" stroke-width="1.7"/><path d="M20.6 10.8V15Q20.6 16.6 22.2 16.6H27.8" fill="none" stroke="#2c98dc" stroke-width="1.4"/></svg>
<svg style="left:1216px;top:1124px" width="30" height="29" viewBox="0 0 30 29"><rect x="4.6" y="1.2" width="23" height="25.4" rx="1" fill="#e4eef0" stroke="#8aa0a0" stroke-width="1.4"/><rect x="7.4" y="3.8" width="17.6" height="20.4" fill="#f6fbfd"/><rect x="7.4" y="3.8" width="17.6" height="4.4" fill="#52bdf6"/><path d="M9.4 5.8H13M15.2 5.8H18.6M20.6 5.8H23.6" stroke="#a8e0fc" stroke-width="1.4"/><rect x="7.4" y="8.2" width="17.6" height="16" fill="#bfe0f0"/><path d="M9.2 10.6H13M15.2 10.6H18.8M20.8 10.6H23.6M9.2 14.4H13M15.2 14.4H18.8M20.8 14.4H23.6M15.2 18.2H18.8M20.8 18.2H23.6M9.2 22H13M15.2 22H18.8M20.8 22H23.6" stroke="#fff" stroke-width="2.2"/><path d="M1 15.4H9.4V12.4L14.4 17.4L9.4 22.4V19.4H1Z" fill="#f8fafa" stroke="#a4b0b0" stroke-width="1"/></svg>
<svg style="left:1438px;top:1206px" width="32" height="25" viewBox="0 0 32 25"><defs><linearGradient id="gk" x1="0" y1="0" x2="0" y2="1"><stop offset="0" stop-color="#2ee62a"/><stop offset="0.5" stop-color="#10e010"/><stop offset="1" stop-color="#0a9a0c"/></linearGradient></defs><path d="M2 5.2Q7 9 10.4 13.2Q19 6 30 1.6Q17.6 11.6 8.4 23.2Q6.6 14 2 5.2Z" fill="url(#gk)" stroke="#16a018" stroke-width="0.9" stroke-linejoin="round"/></svg>
<span class="t" style="left:7.60px;top:14.66px;font-size:20.6px;letter-spacing:0.354px;color:#f6f8fa;">Other Data Module</span>
<span class="t" style="left:22.20px;top:70.65px;font-size:20.5px;letter-spacing:0.381px;font-weight:bold;">Other Data Manager</span>
<span class="t" style="left:36.30px;top:142.82px;font-size:20.3px;letter-spacing:0.397px;">Add</span>
<span class="t" style="left:94.00px;top:142.82px;font-size:20.3px;letter-spacing:-0.238px;">Edit</span>
<span class="t" style="left:141.00px;top:142.82px;font-size:20.3px;letter-spacing:-0.269px;">Delete</span>
<span class="t" style="left:183.50px;top:198.62px;font-size:20.3px;letter-spacing:0.336px;">Available Data</span>
<span class="t" style="left:46.08px;top:238.02px;font-size:21px;transform:scaleX(1.1175);font-weight:bold;">Inclination</span>
<span class="t" style="left:47.60px;top:277.12px;font-size:20.3px;letter-spacing:0.041px;">Description:</span>
<span class="t" style="left:156.50px;top:277.12px;font-size:20.3px;letter-spacing:-0.053px;">Inclination Data Edited</span>
<span class="t" style="left:47.20px;top:316.72px;font-size:21px;transform:scaleX(1.0406);font-weight:bold;">Test1</span>
<span class="t" style="left:47.60px;top:355.82px;font-size:20.3px;letter-spacing:0.041px;">Description:</span>
<span class="t" style="left:156.50px;top:355.82px;font-size:20.3px;letter-spacing:0.079px;">New data from the field</span>
<span class="t" style="left:46.20px;top:395.42px;font-size:21px;letter-spacing:0.090px;font-weight:bold;">From XLS</span>
<span class="t" style="left:47.60px;top:434.52px;font-size:20.3px;letter-spacing:0.041px;">Description:</span>
<span class="t" style="left:156.55px;top:434.52px;font-size:20.3px;transform:scaleX(0.9536);">New XLS file</span>
<span class="t" style="left:502.87px;top:68.62px;font-size:20.3px;transform:scaleX(0.9303);">Data Preview</span>
<span class="t" style="left:525.24px;top:121.62px;font-size:20.3px;transform:scaleX(0.9631);font-weight:bold;">No</span>
<span class="t" style="left:604.45px;top:121.62px;font-size:20.3px;transform:scaleX(1.0505);font-weight:bold;">Depth</span>
<span class="t" style="left:738.50px;top:121.62px;font-size:20.3px;transform:scaleX(1.0665);font-weight:bold;">Test1</span>
<span class="t" style="left:526.20px;top:191.92px;font-size:20.3px;font-weight:bold;">1</span>
<span class="t" style="left:604.50px;top:191.92px;font-size:20.3px;letter-spacing:-0.298px;">0.02</span>
<span class="t" style="left:737.50px;top:191.92px;font-size:20.3px;transform:scaleX(0.9746);">0.38</span>
<span class="t" style="left:527.20px;top:228.68px;font-size:20.3px;font-weight:bold;">2</span>
<span class="t" style="left:604.50px;top:228.68px;font-size:20.3px;letter-spacing:-0.298px;">0.04</span>
<span class="t" style="left:737.30px;top:228.68px;font-size:20.3px;letter-spacing:-0.265px;">1.00</span>
<span class="t" style="left:527.20px;top:265.44px;font-size:20.3px;font-weight:bold;">3</span>
<span class="t" style="left:604.50px;top:265.44px;font-size:20.3px;letter-spacing:-0.298px;">0.06</span>
<span class="t" style="left:737.50px;top:265.44px;font-size:20.3px;transform:scaleX(0.9746);">0.51</span>
<span class="t" style="left:527.20px;top:302.20px;font-size:20.3px;font-weight:bold;">4</span>
<span class="t" style="left:604.50px;top:302.20px;font-size:20.3px;letter-spacing:-0.298px;">0.08</span>
<span class="t" style="left:737.50px;top:302.20px;font-size:20.3px;transform:scaleX(0.9746);">0.52</span>
<span class="t" style="left:527.20px;top:338.96px;font-size:20.3px;font-weight:bold;">5</span>
<span class="t" style="left:604.50px;top:338.96px;font-size:20.3px;letter-spacing:-0.298px;">0.10</span>
<span class="t" style="left:737.50px;top:338.96px;font-size:20.3px;transform:scaleX(0.9746);">0.52</span>
<span class="t" style="left:527.20px;top:375.72px;font-size:20.3px;font-weight:bold;">6</span>
<span class="t" style="left:604.50px;top:375.72px;font-size:20.3px;letter-spacing:-0.298px;">0.12</span>
<span class="t" style="left:737.50px;top:375.72px;font-size:20.3px;transform:scaleX(0.9746);">0.53</span>
<span class="t" style="left:527.20px;top:412.48px;font-size:20.3px;font-weight:bold;">7</span>
<span class="t" style="left:604.50px;top:412.48px;font-size:20.3px;letter-spacing:-0.298px;">0.14</span>
<span class="t" style="left:737.50px;top:412.48px;font-size:20.3px;transform:scaleX(0.9746);">0.52</span>
<span class="t" style="left:527.20px;top:449.24px;font-size:20.3px;font-weight:bold;">8</span>
<span class="t" style="left:604.50px;top:449.24px;font-size:20.3px;letter-spacing:-0.298px;">0.16</span>
<span class="t" style="left:737.50px;top:449.24px;font-size:20.3px;transform:scaleX(0.9746);">0.52</span>
<span class="t" style="left:527.20px;top:486.00px;font-size:20.3px;font-weight:bold;">9</span>
<span class="t" style="left:604.50px;top:486.00px;font-size:20.3px;letter-spacing:-0.298px;">0.18</span>
<span class="t" style="left:737.50px;top:486.00px;font-size:20.3px;transform:scaleX(0.9746);">0.51</span>
<span class="t" style="left:526.11px;top:522.76px;font-size:20.3px;transform:scaleX(1.0903);font-weight:bold;">10</span>
<span class="t" style="left:604.50px;top:522.76px;font-size:20.3px;letter-spacing:-0.298px;">0.20</span>
<span class="t" style="left:737.50px;top:522.76px;font-size:20.3px;transform:scaleX(0.9746);">0.48</span>
<span class="t" style="left:526.05px;top:559.52px;font-size:20.3px;transform:scaleX(1.1508);font-weight:bold;">11</span>
<span class="t" style="left:604.50px;top:559.52px;font-size:20.3px;letter-spacing:-0.298px;">0.22</span>
<span class="t" style="left:737.50px;top:559.52px;font-size:20.3px;transform:scaleX(0.9746);">0.46</span>
<span class="t" style="left:526.11px;top:596.28px;font-size:20.3px;transform:scaleX(1.0903);font-weight:bold;">12</span>
<span class="t" style="left:604.50px;top:596.28px;font-size:20.3px;letter-spacing:-0.298px;">0.24</span>
<span class="t" style="left:737.50px;top:596.28px;font-size:20.3px;transform:scaleX(0.9746);">0.45</span>
<span class="t" style="left:526.11px;top:633.04px;font-size:20.3px;transform:scaleX(1.0903);font-weight:bold;">13</span>
<span class="t" style="left:604.50px;top:633.04px;font-size:20.3px;letter-spacing:-0.298px;">0.26</span>
<span class="t" style="left:737.50px;top:633.04px;font-size:20.3px;transform:scaleX(0.9746);">0.44</span>
<span class="t" style="left:526.16px;top:669.80px;font-size:20.3px;transform:scaleX(1.0413);font-weight:bold;">14</span>
<span class="t" style="left:604.50px;top:669.80px;font-size:20.3px;letter-spacing:-0.298px;">0.28</span>
<span class="t" style="left:737.50px;top:669.80px;font-size:20.3px;transform:scaleX(0.9746);">0.44</span>
<span class="t" style="left:526.11px;top:706.56px;font-size:20.3px;transform:scaleX(1.0903);font-weight:bold;">15</span>
<span class="t" style="left:604.50px;top:706.56px;font-size:20.3px;letter-spacing:-0.298px;">0.30</span>
<span class="t" style="left:737.50px;top:706.56px;font-size:20.3px;transform:scaleX(0.9746);">0.42</span>
<span class="t" style="left:526.11px;top:743.32px;font-size:20.3px;transform:scaleX(1.0903);font-weight:bold;">16</span>
<span class="t" style="left:604.50px;top:743.32px;font-size:20.3px;letter-spacing:-0.298px;">0.32</span>
<span class="t" style="left:737.50px;top:743.32px;font-size:20.3px;transform:scaleX(0.9746);">0.42</span>
<span class="t" style="left:526.11px;top:780.08px;font-size:20.3px;transform:scaleX(1.0903);font-weight:bold;">17</span>
<span class="t" style="left:604.50px;top:780.08px;font-size:20.3px;letter-spacing:-0.298px;">0.34</span>
<span class="t" style="left:737.50px;top:780.08px;font-size:20.3px;transform:scaleX(0.9746);">0.41</span>
<span class="t" style="left:526.11px;top:816.84px;font-size:20.3px;transform:scaleX(1.0903);font-weight:bold;">18</span>
<span class="t" style="left:604.50px;top:816.84px;font-size:20.3px;letter-spacing:-0.298px;">0.36</span>
<span class="t" style="left:737.50px;top:816.84px;font-size:20.3px;transform:scaleX(0.9746);">0.40</span>
<span class="t" style="left:526.11px;top:853.60px;font-size:20.3px;transform:scaleX(1.0903);font-weight:bold;">19</span>
<span class="t" style="left:604.50px;top:853.60px;font-size:20.3px;letter-spacing:-0.298px;">0.38</span>
<span class="t" style="left:737.50px;top:853.60px;font-size:20.3px;transform:scaleX(0.9746);">0.40</span>
<span class="t" style="left:527.20px;top:890.36px;font-size:20.3px;transform:scaleX(1.0413);font-weight:bold;">20</span>
<span class="t" style="left:604.50px;top:890.36px;font-size:20.3px;letter-spacing:-0.298px;">0.40</span>
<span class="t" style="left:737.50px;top:890.36px;font-size:20.3px;transform:scaleX(0.9746);">0.40</span>
<span class="t" style="left:527.20px;top:927.12px;font-size:20.3px;transform:scaleX(1.0413);font-weight:bold;">21</span>
<span class="t" style="left:604.50px;top:927.12px;font-size:20.3px;letter-spacing:-0.298px;">0.42</span>
<span class="t" style="left:737.50px;top:927.12px;font-size:20.3px;transform:scaleX(0.9746);">0.39</span>
<span class="t" style="left:527.20px;top:963.88px;font-size:20.3px;transform:scaleX(1.0413);font-weight:bold;">22</span>
<span class="t" style="left:604.50px;top:963.88px;font-size:20.3px;letter-spacing:-0.298px;">0.44</span>
<span class="t" style="left:737.50px;top:963.88px;font-size:20.3px;transform:scaleX(0.9746);">0.40</span>
<span class="t" style="left:527.20px;top:1000.64px;font-size:20.3px;transform:scaleX(1.0413);font-weight:bold;">23</span>
<span class="t" style="left:604.50px;top:1000.64px;font-size:20.3px;letter-spacing:-0.298px;">0.46</span>
<span class="t" style="left:737.50px;top:1000.64px;font-size:20.3px;transform:scaleX(0.9746);">0.40</span>
<span class="t" style="left:527.20px;top:1037.40px;font-size:20.3px;letter-spacing:-0.079px;font-weight:bold;">24</span>
<span class="t" style="left:604.50px;top:1037.40px;font-size:20.3px;letter-spacing:-0.298px;">0.48</span>
<span class="t" style="left:737.50px;top:1037.40px;font-size:20.3px;transform:scaleX(0.9746);">0.40</span>
<span class="t" style="left:527.20px;top:1074.16px;font-size:20.3px;transform:scaleX(1.0413);font-weight:bold;">25</span>
<span class="t" style="left:604.50px;top:1074.16px;font-size:20.3px;letter-spacing:-0.298px;">0.50</span>
<span class="t" style="left:737.50px;top:1074.16px;font-size:20.3px;transform:scaleX(0.9746);">0.40</span>
<span class="t" style="left:586.11px;top:1130.02px;font-size:20.3px;transform:scaleX(0.8929);">Clear</span>
<span class="t" style="left:735.08px;top:1130.02px;font-size:20.3px;transform:scaleX(0.9195);">Paste Data</span>
<span class="t" style="left:923.50px;top:1130.02px;font-size:20.3px;letter-spacing:-0.068px;">Import</span>
<span class="t" style="left:1249.60px;top:1128.42px;font-size:20.3px;transform:scaleX(0.8969);">Commit Changes</span>
<span class="t" style="left:1473.62px;top:1209.02px;font-size:20.3px;transform:scaleX(0.8799);">Close</span>
</body></html>
